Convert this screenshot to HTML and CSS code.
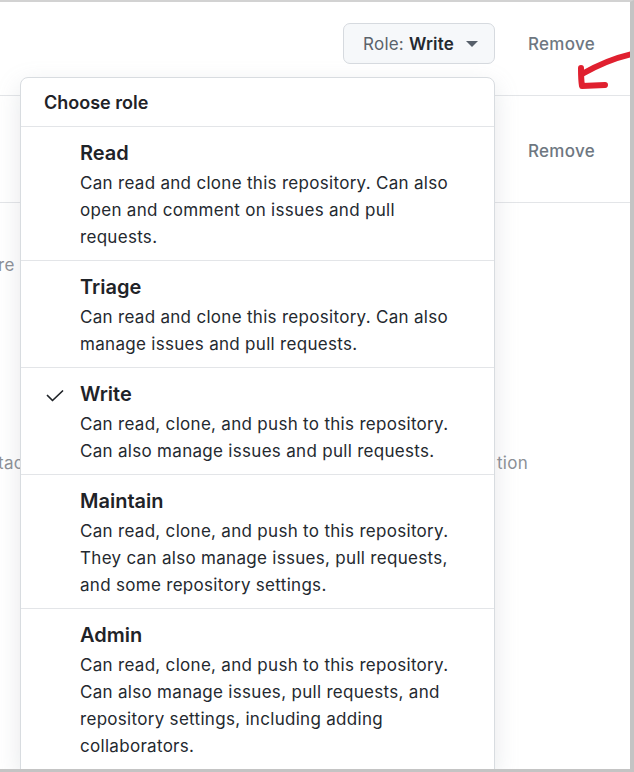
FILE: index.html
```html
<!DOCTYPE html>
<html>
<head>
<meta charset="utf-8">
<link rel="stylesheet" href="styles.css">
</head>
<body>
<div class="window">
  <div class="row row-top">
    <button class="role-btn"><span class="role-label">Role:</span> <span class="role-value">Write</span><span class="caret"></span></button>
    <span class="remove">Remove</span>
  </div>
  <div class="row row-second">
    <span class="remove">Remove</span>
  </div>
  <div class="bg-content">
    <div class="bg-line bg-line-1"><span class="bg-left">re</span></div>
    <div class="bg-line bg-line-2"><span class="bg-left">tac</span><span class="bg-right">tion</span></div>
  </div>

  <svg class="red-arrow" width="60" height="45" viewBox="0 0 60 45">
    <path d="M58 4 C 40 8, 22 16, 8 24" fill="none" stroke="#e0202f" stroke-width="6" stroke-linecap="round"/>
    <path d="M7 18 C 7 24, 7 30, 8 36 L 31 35" fill="none" stroke="#e0202f" stroke-width="6" stroke-linecap="round" stroke-linejoin="round"/>
  </svg>

  <div class="menu">
    <div class="menu-header">Choose role</div>
    <div class="menu-item">
      <div class="check-col"></div>
      <div class="item-body">
        <div class="item-title">Read</div>
        <div class="item-desc">Can read and clone this repository. Can also open and comment on issues and pull requests.</div>
      </div>
    </div>
    <div class="menu-item">
      <div class="check-col"></div>
      <div class="item-body">
        <div class="item-title">Triage</div>
        <div class="item-desc">Can read and clone this repository. Can also manage issues and pull requests.</div>
      </div>
    </div>
    <div class="menu-item">
      <div class="check-col">
        <svg class="check" width="18" height="12" viewBox="0 0 18 12"><polyline points="1.5,5.5 6.5,10.5 16.5,1" fill="none" stroke="#1f2328" stroke-width="1.7" stroke-linecap="round" stroke-linejoin="round"/></svg>
      </div>
      <div class="item-body">
        <div class="item-title">Write</div>
        <div class="item-desc">Can read, clone, and push to this repository. Can also manage issues and pull requests.</div>
      </div>
    </div>
    <div class="menu-item">
      <div class="check-col"></div>
      <div class="item-body">
        <div class="item-title">Maintain</div>
        <div class="item-desc">Can read, clone, and push to this repository. They can also manage issues, pull requests, and some repository settings.</div>
      </div>
    </div>
    <div class="menu-item">
      <div class="check-col"></div>
      <div class="item-body">
        <div class="item-title">Admin</div>
        <div class="item-desc">Can read, clone, and push to this repository. Can also manage issues, pull requests, and repository settings, including adding collaborators.</div>
      </div>
    </div>
  </div>
</div>
</body>
</html>
```

FILE: styles.css
```css
* { box-sizing: border-box; }
html, body { margin: 0; padding: 0; background: #fff; }
body {
  width: 634px;
  height: 772px;
  overflow: hidden;
  font-family: Inter, "Noto Sans", sans-serif;
  color: #1f2328;
}
.window {
  position: relative;
  width: 634px;
  height: 772px;
  overflow: hidden;
  border-top: 2px solid #d2d2d2;
  border-right: 4px solid #c4c4c4;
  border-bottom: 3px solid #c4c4c4;
  background: #fff;
}
.row {
  display: flex;
  align-items: center;
  justify-content: flex-end;
  border-bottom: 1px solid #e3e5e8;
  padding-right: 35px;
}
.row-top {
  height: 94px;
  padding-top: 2px;
  padding-bottom: 12px;
  gap: 33px;
}
.row-second {
  height: 107px;
  padding-top: 3px;
}
.role-btn {
  display: flex;
  align-items: center;
  height: 41px;
  padding: 0 16px 0 19px;
  background: #f6f8fa;
  border: 1px solid #d6dadf;
  border-radius: 7px;
  font-family: inherit;
  font-size: 17px;
  letter-spacing: 0.2px;
  color: #5b636b;
}
.role-label { margin-right: 5px; }
.role-value { font-weight: 600; color: #24292f; }
.caret {
  width: 0; height: 0;
  border-left: 6px solid transparent;
  border-right: 6px solid transparent;
  border-top: 6px solid #57606a;
  margin-left: 12px;
}
.remove {
  font-size: 17px;
  font-weight: 500;
  letter-spacing: 0.3px;
  color: #6e7781;
}
.bg-content {
  padding-top: 52px;
}
.bg-line {
  position: relative;
  height: 20px;
  font-size: 17px;
  letter-spacing: 0.3px;
  color: #8c9096;
  line-height: 20px;
}
.bg-line-2 { margin-top: 178px; }
.bg-left { margin-left: -2px; }
.bg-right { position: absolute; left: 497px; top: 0; }

.red-arrow {
  position: absolute;
  top: 48px;
  right: -4px;
}

.menu {
  position: absolute;
  left: 20px;
  top: 75px;
  width: 475px;
  background: #fff;
  border: 1px solid #d8dce0;
  border-radius: 8px 8px 0 0;
  box-shadow: 0 8px 24px rgba(140, 149, 159, 0.22);
}
.menu-header {
  height: 49px;
  display: flex;
  align-items: center;
  padding-left: 23px;
  font-size: 18px;
  font-weight: 600;
  border-bottom: 1px solid #e3e5e8;
}
.menu-item {
  display: flex;
  padding: 13px 24px 9px 24px;
  border-bottom: 1px solid #e3e5e8;
}
.menu-item:last-child { border-bottom: none; }
.check-col {
  width: 35px;
  flex: none;
  padding-top: 9px;
}
.check { display: block; margin-left: 1px; }
.item-body {
  width: 390px;
  flex: none;
}
.item-title {
  font-size: 20px;
  font-weight: 600;
  line-height: 27px;
  margin-bottom: 3px;
  color: #1f2328;
}
.item-desc {
  font-size: 17px;
  letter-spacing: 0.3px;
  line-height: 27px;
  color: #24292f;
}
```
